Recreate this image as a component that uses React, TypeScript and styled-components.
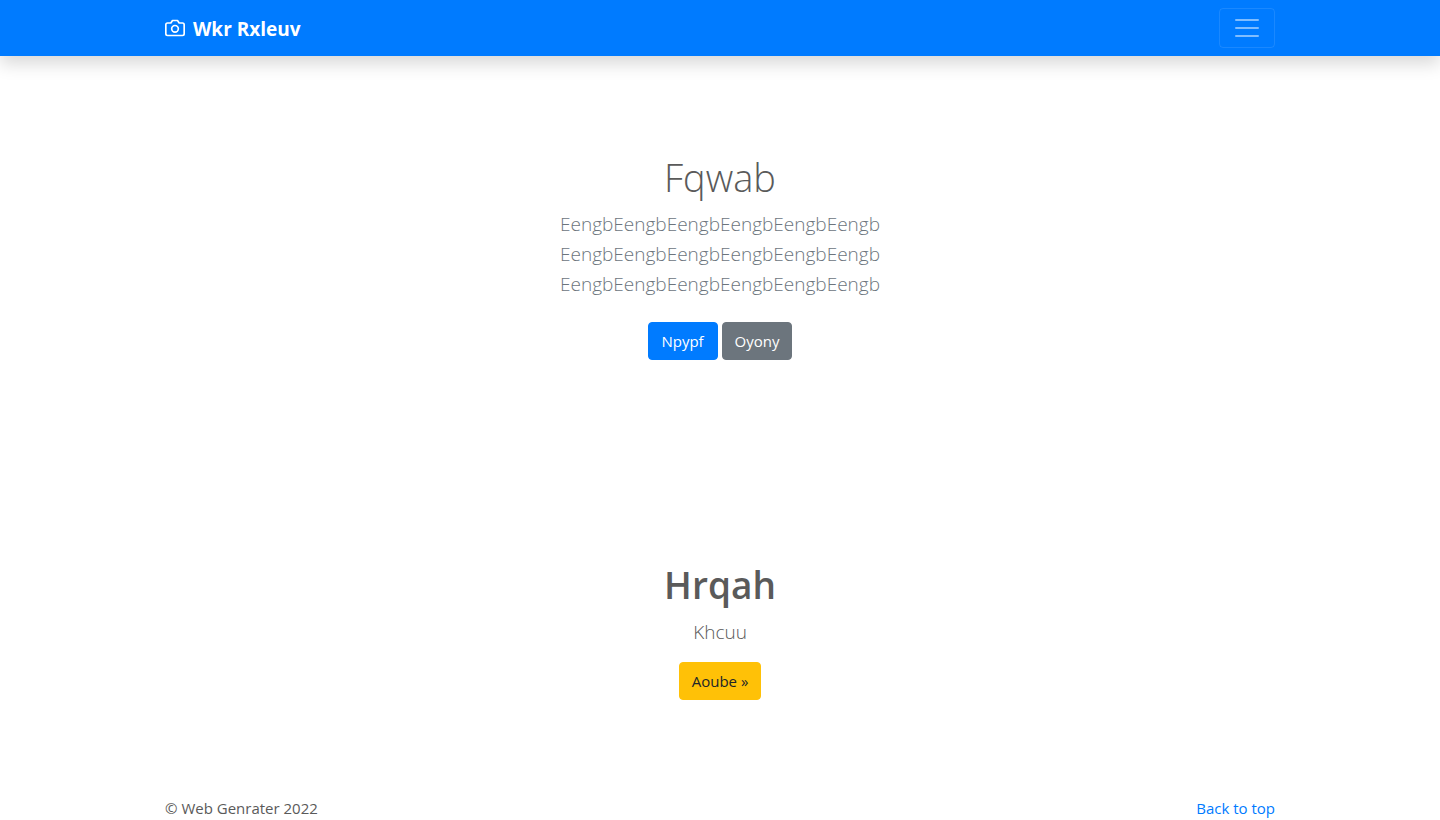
import React from "react";
import styled, { createGlobalStyle, css } from "styled-components";

const GlobalStyle = createGlobalStyle`
  *, *::before, *::after { box-sizing: border-box; }
  body {
    margin: 0;
    font-family: "Segoe UI", "Open Sans", "Noto Sans", sans-serif;
    font-size: 15px;
    line-height: 24px;
    color: #5a5a5a;
    background: #fff;
  }
`;

const Container = styled.div`
  display: flex;
  align-items: center;
  justify-content: space-between;
  width: 100%;
  max-width: 1140px;
  margin: 0 auto;
  padding: 0 15px;
`;

const Navbar = styled.header`
  padding: 8px 0;
  background: #007bff;
  box-shadow: 0 8px 16px rgba(0, 0, 0, 0.15);
`;

const Brand = styled.a`
  display: flex;
  align-items: center;
  gap: 8px;
  color: #fff;
  font-size: 19px;
  font-weight: 700;
  line-height: 30px;
  text-decoration: none;
`;

const BrandName = styled.span`
  padding-top: 2px;
`;

const Toggler = styled.button`
  display: flex;
  align-items: center;
  justify-content: center;
  width: 56px;
  height: 40px;
  padding: 0;
  border: 1px solid rgba(255, 255, 255, 0.1);
  border-radius: 4px;
  background: transparent;
  cursor: pointer;
`;

const Section = styled.section<{ $last?: boolean }>`
  display: flex;
  flex-direction: column;
  align-items: center;
  padding: ${(p) => (p.$last ? "105px 15px 96px" : "97px 15px 96px")};
  text-align: center;
`;

const Heading = styled.h1<{ $light?: boolean }>`
  margin: 0 0 8px;
  font-size: ${(p) => (p.$light ? 38 : 37)}px;
  font-weight: ${(p) => (p.$light ? 300 : 600)};
  line-height: 48px;
`;

const Lead = styled.p<{ $muted?: boolean }>`
  margin: 0 0 15px;
  font-size: 19px;
  font-weight: 300;
  line-height: 30px;
  ${(p) => p.$muted && css`color: #6c757d;`}
`;

const Actions = styled.div`
  display: flex;
  gap: 4px;
  margin-top: 8px;
`;

const tones = {
  primary: ["#007bff", "#fff"],
  secondary: ["#6c757d", "#fff"],
  warning: ["#ffc107", "#212529"],
};

const Button = styled.button<{ $tone: keyof typeof tones }>`
  min-width: 70px;
  padding: 6px 12px;
  border: 1px solid ${(p) => tones[p.$tone][0]};
  border-radius: 4px;
  background: ${(p) => tones[p.$tone][0]};
  color: ${(p) => tones[p.$tone][1]};
  font: inherit;
  cursor: pointer;
`;

const FooterLink = styled.a`
  color: #007bff;
  text-decoration: none;
`;

const CameraIcon = () => (
  <svg width="20" height="20" viewBox="0 0 24 24" fill="none" stroke="currentColor" strokeWidth="2" strokeLinecap="round" strokeLinejoin="round" aria-hidden="true">
    <path d="M23 19a2 2 0 0 1-2 2H3a2 2 0 0 1-2-2V8a2 2 0 0 1 2-2h4l2-3h6l2 3h4a2 2 0 0 1 2 2z" />
    <circle cx="12" cy="13" r="4" />
  </svg>
);

const MenuIcon = () => (
  <svg width="30" height="30" viewBox="0 0 30 30" stroke="rgba(255,255,255,0.5)" strokeWidth="2" strokeLinecap="round" strokeMiterlimit="10" aria-hidden="true">
    <path d="M4 7h22M4 15h22M4 23h22" />
  </svg>
);

export default function App() {
  return (
    <>
      <GlobalStyle />
      <Navbar id="top">
        <Container>
          <Brand href="#top">
            <CameraIcon />
            <BrandName>Wkr Rxleuv</BrandName>
          </Brand>
          <Toggler type="button" aria-label="Toggle navigation">
            <MenuIcon />
          </Toggler>
        </Container>
      </Navbar>
      <main>
        <Section>
          <Heading $light>Fqwab</Heading>
          <Lead $muted>
            EengbEengbEengbEengbEengbEengb
            <br />
            EengbEengbEengbEengbEengbEengb
            <br />
            EengbEengbEengbEengbEengbEengb
          </Lead>
          <Actions>
            <Button type="button" $tone="primary">Npypf</Button>
            <Button type="button" $tone="secondary">Oyony</Button>
          </Actions>
        </Section>
        <Section $last>
          <Heading as="h2">Hrqah</Heading>
          <Lead>Khcuu</Lead>
          <Button type="button" $tone="warning">Aoube »</Button>
        </Section>
      </main>
      <Container as="footer">
        <span>© Web Genrater 2022</span>
        <FooterLink href="#top">Back to top</FooterLink>
      </Container>
    </>
  );
}
